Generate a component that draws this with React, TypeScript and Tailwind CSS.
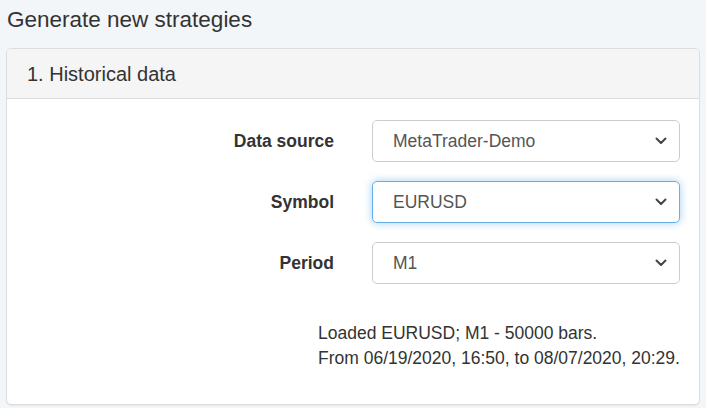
const Chevron = () => (
    <svg width="12" height="8" viewBox="0 0 12 8" className="shrink-0">
        <polyline points="1.5,1.5 6,6 10.5,1.5" fill="none" stroke="#444" strokeWidth="2" strokeLinecap="round" strokeLinejoin="round" />
    </svg>
)

const FieldRow = ({ label, value, focused }: { label: string; value: string; focused?: boolean }) => {
    return (
        <div className="flex items-center">
            <div className="w-[327px] text-right font-bold text-[17.5px] text-[#333]">{label}</div>
            <div
                className={
                    focused
                        ? "ml-[38px] w-[308px] h-[42px] flex items-center justify-between pl-[20px] pr-[12px] bg-white rounded-[5px] border border-[#66afe9] shadow-[0_0_8px_rgba(102,175,233,0.6)]"
                        : "ml-[38px] w-[308px] h-[42px] flex items-center justify-between pl-[20px] pr-[12px] bg-white rounded-[5px] border border-[#ccc]"
                }
            >
                <span className="text-[17.5px] text-[#555]">{value}</span>
                <Chevron />
            </div>
        </div>
    )
}

const App = () => {
    return (
        <div className="w-[706px] h-[408px] bg-[#f3f6f9] overflow-hidden" style={{ fontFamily: '"Liberation Sans", Arial, sans-serif' }}>
            <h1 className="pl-[7px] pt-[7px] text-[22.5px] leading-[25px] font-normal text-[#333]">Generate new strategies</h1>
            <div className="ml-[6px] mt-[16px] w-[694px] bg-white border border-[#ddd] rounded-[5px] shadow-[0_1px_1px_rgba(0,0,0,0.05)] overflow-hidden">
                <div className="h-[50px] flex items-center pl-[20px] bg-[#f5f5f5] border-b border-[#ddd] text-[20px] text-[#333]">
                    1. Historical data
                </div>
                <div className="pt-[21px] pb-[33px] flex flex-col gap-[19px]">
                    <FieldRow label="Data source" value="MetaTrader-Demo" />
                    <FieldRow label="Symbol" value="EURUSD" focused />
                    <FieldRow label="Period" value="M1" />
                    <div className="ml-[311px] mt-[18px] text-[17.5px] leading-[25px] text-[#333]">
                        <p>Loaded EURUSD; M1 - 50000 bars.</p>
                        <p>From 06/19/2020, 16:50, to 08/07/2020, 20:29.</p>
                    </div>
                </div>
            </div>
        </div>
    )
}

export default App;
